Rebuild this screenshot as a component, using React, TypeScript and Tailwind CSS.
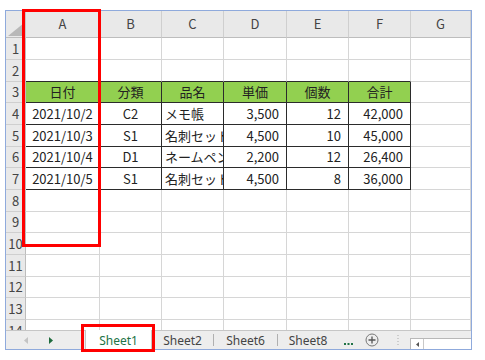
import React from "react";

const FONT = { fontFamily: '"Noto Sans CJK JP", "Noto Sans", sans-serif' };
const UIFONT = { fontFamily: '"Noto Sans", "Open Sans", sans-serif' };

const cols = ["A", "B", "C", "D", "E", "F", "G"];
const rowHeights = [22, 22, 21, 22, 22, 21, 22, 22, 21, 22, 22, 21, 22, 22];

const data: Record<number, string[]> = {
  3: ["日付", "分類", "品名", "単価", "個数", "合計"],
  4: ["2021/10/2", "C2", "メモ帳", "3,500", "12", "42,000"],
  5: ["2021/10/3", "S1", "名刺セット", "4,500", "10", "45,000"],
  6: ["2021/10/4", "D1", "ネームペン", "2,200", "12", "26,400"],
  7: ["2021/10/5", "S1", "名刺セット", "4,500", "8", "36,000"],
};

const inTable = (r: number, c: number) => r >= 3 && r <= 7 && c >= 0 && c <= 5;

const align = ["justify-center", "justify-center", "justify-start pl-[3px]", "justify-end pr-[7px]", "justify-end pr-[7px]", "justify-end pr-[7px]", ""];

function Cell({ r, c }: { r: number; c: number }) {
  const dark = "#2b2b2b";
  const grid = "#d6d6d6";
  const right = inTable(r, c) || inTable(r, c + 1) ? dark : grid;
  const bottom = inTable(r, c) || inTable(r + 1, c) ? dark : grid;
  const text = data[r]?.[c];
  const header = r === 3 && c <= 5;
  return (
    <div
      className={`flex items-center overflow-hidden whitespace-nowrap border-r border-b text-[13px] text-[#222] ${
        header ? "bg-[#92d050] justify-center" : `bg-white ${align[c]}`
      }`}
      style={{ borderRightColor: right, borderBottomColor: bottom, ...FONT }}
    >
      {text}
    </div>
  );
}

export default function App() {
  return (
    <div className="relative w-[485px] h-[360px] bg-white overflow-hidden pl-[5px] pt-[10px]">
      <div className="w-[467px] h-[340px] border border-[#8faadc] flex flex-col">
        {/* grid */}
        <div className="h-[319px] overflow-hidden">
          <div
            className="grid grid-cols-[20px_74px_62px_62px_63px_62px_62px_60px]"
            style={{ gridTemplateRows: `27px ${rowHeights.map((h) => h + "px").join(" ")}` }}
          >
            {/* corner */}
            <div className="relative bg-[#e9e9e9] border-r border-b border-r-[#c8c8c8] border-b-[#bdbdbd]">
              <svg className="absolute left-[2px] top-[12px]" width="16" height="13" viewBox="0 0 16 13">
                <polygon points="0,13 16,13 16,0" fill="#b8b8b8" />
              </svg>
            </div>
            {cols.map((c) => (
              <div
                key={c}
                className="flex items-center justify-center bg-[#e9e9e9] border-r border-b border-r-[#cfcfcf] border-b-[#bdbdbd] text-[13px] text-[#444]"
                style={FONT}
              >
                {c}
              </div>
            ))}
            {rowHeights.map((_, i) => {
              const r = i + 1;
              return (
                <React.Fragment key={r}>
                  <div
                    className="flex items-center justify-center bg-[#e9e9e9] border-r border-b border-r-[#bdbdbd] border-b-[#cfcfcf] text-[13px] text-[#444] overflow-hidden whitespace-nowrap"
                    style={FONT}
                  >
                    {r}
                  </div>
                  {cols.map((_, c) => (
                    <Cell key={c} r={r} c={c} />
                  ))}
                </React.Fragment>
              );
            })}
          </div>
        </div>
        {/* tab bar */}
        <div className="h-[19px] bg-[#ededed] border-t border-[#c6c6c6] flex items-stretch text-[12px]" style={UIFONT}>
          <div className="w-[79px] flex items-center">
            <svg className="ml-[18px]" width="4" height="7" viewBox="0 0 4 7">
              <polygon points="4,0 4,7 0,3.5" fill="#c4c4c4" />
            </svg>
            <svg className="ml-[21px]" width="4" height="7" viewBox="0 0 4 7">
              <polygon points="0,0 0,7 4,3.5" fill="#1e6b3c" />
            </svg>
          </div>
          <div className="w-[67px] -mt-px bg-white border-x border-[#c6c6c6] flex items-center justify-center text-[#217346] pt-[2px]">
            Sheet1
          </div>
          <div className="w-[61px] flex items-center justify-center text-[#444] pt-[2px]">Sheet2</div>
          <div className="w-px h-[12px] self-center bg-[#b0b0b0]" />
          <div className="w-[63px] flex items-center justify-center text-[#444] pt-[2px]">Sheet6</div>
          <div className="w-px h-[12px] self-center bg-[#b0b0b0]" />
          <div className="w-[60px] flex items-center justify-center text-[#444] pt-[2px]">Sheet8</div>
          <div className="w-[20px] flex items-end justify-center pb-[4px]">
            <svg width="9" height="2" viewBox="0 0 9 2">
              <rect x="0" y="0" width="2" height="2" fill="#217346" />
              <rect x="3.5" y="0" width="2" height="2" fill="#217346" />
              <rect x="7" y="0" width="2" height="2" fill="#217346" />
            </svg>
          </div>
          <div className="w-[28px] flex items-center justify-center">
            <svg width="14" height="14" viewBox="0 0 14 14">
              <circle cx="7" cy="7" r="6" fill="none" stroke="#777" strokeWidth="1" />
              <path d="M7 3.5v7M3.5 7h7" stroke="#555" strokeWidth="1.3" />
            </svg>
          </div>
          <div className="w-[24px] flex items-center justify-center">
            <svg width="2" height="11" viewBox="0 0 2 11">
              <rect x="0.5" y="0" width="1" height="1" fill="#aaa" />
              <rect x="0.5" y="3" width="1" height="1" fill="#aaa" />
              <rect x="0.5" y="6" width="1" height="1" fill="#aaa" />
              <rect x="0.5" y="9" width="1" height="1" fill="#aaa" />
            </svg>
          </div>
          <div className="flex-1 flex items-end">
            <div className="w-full h-[11px] bg-white border-l border-t border-[#b8b8b8] flex items-center">
              <div className="w-[13px] h-full border-r border-[#c8c8c8] flex items-center justify-center">
                <svg width="3" height="5" viewBox="0 0 3 5">
                  <polygon points="3,0 3,5 0,2.5" fill="#555" />
                </svg>
              </div>
            </div>
          </div>
        </div>
      </div>
      {/* red highlight boxes */}
      <div className="absolute left-[22px] top-[9px] w-[79px] h-[238px] border-[3px] border-[#ff0000]" />
      <div className="absolute left-[81px] top-[324px] w-[74px] h-[28px] border-[3px] border-[#ff0000]" />
    </div>
  );
}
